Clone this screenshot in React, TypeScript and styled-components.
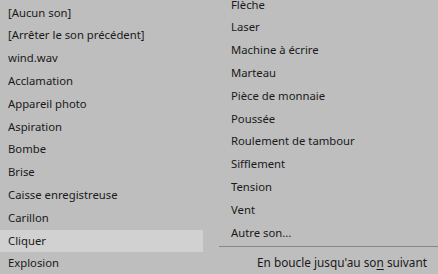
import React from 'react';
import styled, { createGlobalStyle } from 'styled-components';

const GlobalStyle = createGlobalStyle`
  html, body {
    margin: 0;
    padding: 0;
    background: #bebebe;
    overflow: hidden;
  }
`;

const ROW = 22.8;

const Menu = styled.div`
  display: grid;
  grid-template-columns: 203px 1fr;
  column-gap: 16px;
  width: 438px;
  height: 274px;
  overflow: hidden;
  background: #bebebe;
  color: #1a1a1a;
  font-family: 'Noto Sans', 'Open Sans', sans-serif;
  font-size: 11.3px;
`;

const Column = styled.div<{ offset: number }>`
  display: flex;
  flex-direction: column;
  margin-top: ${({ offset }) => offset}px;
`;

const Item = styled.div<{ active?: boolean; indent?: number }>`
  height: ${ROW}px;
  line-height: ${ROW}px;
  padding-left: ${({ indent }) => indent ?? 8}px;
  white-space: nowrap;
  background: ${({ active }) => (active ? '#d1d1d1' : 'transparent')};
  cursor: default;
`;

const Footer = styled(Item)`
  font-size: 11.8px;
`;

const Separator = styled.div`
  height: 1px;
  background: #868686;
  margin: 1.5px 0 4.6px 0;
`;

const Key = styled.span`
  text-decoration: underline;
  text-underline-offset: 2px;
`;

const leftItems = [
  '[Aucun son]',
  '[Arrêter le son précédent]',
  'wind.wav',
  'Acclamation',
  'Appareil photo',
  'Aspiration',
  'Bombe',
  'Brise',
  'Caisse enregistreuse',
  'Carillon',
  'Cliquer',
  'Explosion',
];

const rightItems = [
  'Flèche',
  'Laser',
  'Machine à écrire',
  'Marteau',
  'Pièce de monnaie',
  'Poussée',
  'Roulement de tambour',
  'Sifflement',
  'Tension',
  'Vent',
  'Autre son...',
];

export default function App() {
  return (
    <>
      <GlobalStyle />
      <Menu>
        <Column offset={1.6}>
          {leftItems.map((label) => (
            <Item key={label} active={label === 'Cliquer'}>
              {label}
            </Item>
          ))}
        </Column>
        <Column offset={-6.4}>
          {rightItems.map((label) => (
            <Item key={label} indent={12}>
              {label}
            </Item>
          ))}
          <Separator />
          <Footer indent={38}>
            En boucle jusqu'au so<Key>n</Key> suivant
          </Footer>
        </Column>
      </Menu>
    </>
  );
}
